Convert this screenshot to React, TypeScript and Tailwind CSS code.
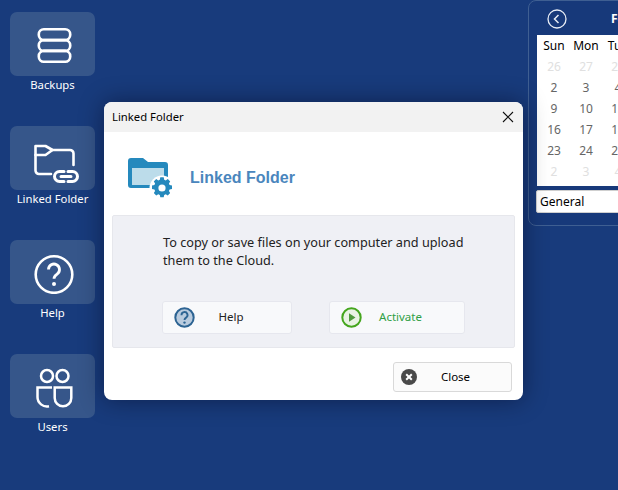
const font = { fontFamily: '"Noto Sans","Open Sans",sans-serif' };

function Tile({ label, children }: { label: string; children: React.ReactNode }) {
  return (
    <div className="flex h-[114px] w-[85px] flex-col items-center">
      <div className="flex h-16 w-[85px] items-center justify-center rounded-[7px] bg-[#36568a]">{children}</div>
      <div className="whitespace-nowrap text-[11.3px] leading-[18px] text-white">{label}</div>
    </div>
  );
}

const weeks = [
  [["26", 1], ["27", 1], ["28", 1]],
  [["2", 0], ["3", 0], ["4", 0]],
  [["9", 0], ["10", 0], ["11", 0]],
  [["16", 0], ["17", 0], ["18", 0]],
  [["23", 0], ["24", 0], ["25", 0]],
  [["2", 1], ["3", 1], ["4", 1]],
] as [string, number][][];

function Calendar() {
  return (
    <div className="ml-[433px] h-[226px] w-[200px] shrink-0 rounded-[8px] border border-[#3f5f92] bg-[#17397a] pl-[8px]">
      <div className="flex h-[34px] items-center pl-[10px] pt-[2px]">
        <svg width="20" height="20" viewBox="0 0 20 20" fill="none" stroke="#e8edf5" strokeWidth="1.3">
          <circle cx="10" cy="10" r="9" />
          <path d="M11.5 6 7.5 10l4 4" strokeWidth="1.5" />
        </svg>
        <span className="ml-[44px] text-[12px] font-bold text-white">February</span>
      </div>
      <div className="h-[151px] w-[200px] bg-white pl-[1px] text-[12px] leading-[21px]">
        <div className="flex text-black">
          {["Sun", "Mon", "Tue"].map((d) => (
            <div key={d} className="w-[32px] text-center">{d}</div>
          ))}
        </div>
        {weeks.map((w, i) => (
          <div key={i} className="flex">
            {w.map(([d, faded], j) => (
              <div key={j} className={`w-[32px] text-center ${faded ? "text-[#e0e0e0]" : "text-[#666]"}`}>{d}</div>
            ))}
          </div>
        ))}
      </div>
      <div className="-ml-[1px] mt-[4px] flex h-[23px] w-[200px] items-center rounded-[2px] border border-[#cfcfcf] bg-white pl-[3px] text-[12px] text-black">General</div>
    </div>
  );
}

function Dialog() {
  return (
    <div className="absolute left-[104px] top-[102px] flex h-[298px] w-[419px] flex-col overflow-hidden rounded-[8px] bg-white shadow-[0_0_24px_rgba(0,0,20,0.45)]">
      <div className="flex h-[30px] items-center justify-between bg-[#f2f2f2] pl-[8px] pr-[9px] text-[11.3px] text-black">
        <span className="pt-[1px]">Linked Folder</span>
        <svg width="12" height="12" viewBox="0 0 12 12" stroke="#111" strokeWidth="1.1">
          <path d="M1 1 11 11M11 1 1 11" />
        </svg>
      </div>
      <div className="flex h-[83px] items-center pl-[24px] pt-[7px]">
        <svg className="mt-[2px]" width="46" height="44" viewBox="0 0 46 44">
          <path d="M0 5a3 3 0 0 1 3-3h12l5 4h17a3 3 0 0 1 3 3v20a3 3 0 0 1-3 3H3a3 3 0 0 1-3-3z" fill="#2589bd" />
          <path d="M4 12h32v17H4z" fill="#bcdcea" />
          <circle cx="34" cy="32" r="12.5" fill="#fff" />
          <path transform="translate(0 0.8)" fill="#2589bd" fillRule="evenodd" d="M32.3 20.5h3.4l.5 2.4 1.5.7 2.1-1.3 2.4 2.4-1.3 2.1.7 1.5 2.4.5v3.4l-2.4.5-.7 1.5 1.3 2.1-2.4 2.4-2.1-1.3-1.5.7-.5 2.4h-3.4l-.5-2.4-1.5-.7-2.1 1.3-2.4-2.4 1.3-2.1-.7-1.5-2.4-.5v-3.4l2.4-.5.7-1.5-1.3-2.1 2.4-2.4 2.1 1.3 1.5-.7zM34 27.6a3.6 3.6 0 1 0 0 7.2 3.6 3.6 0 0 0 0-7.2z" />
        </svg>
        <span className="ml-[16px] mt-[1px] text-[16px] font-bold text-[#4a86bd]" style={{ fontFamily: '"Liberation Sans",sans-serif' }}>Linked Folder</span>
      </div>
      <div className="mx-[8px] flex h-[133px] flex-col rounded-[2px] border border-[#e6e7ec] bg-[#eff0f5] pl-[49px]">
        <p className="ml-[1px] mt-[17px] w-[320px] text-[12.7px] leading-[18px] text-[#222]">To copy or save files on your computer and upload them to the Cloud.</p>
        <div className="mt-[32px] flex gap-[37px]">
          <div className="relative flex h-[33px] w-[130px] items-center justify-center rounded-[3px] border border-[#e6e7ee] bg-[#f8f9fb] pb-[1px] pl-[8px] text-[11.5px] text-[#222]">
            <svg className="absolute left-[11px] top-[5px]" width="21" height="21" viewBox="0 0 21 21">
              <circle cx="10.5" cy="10.5" r="9.2" fill="#b9cbde" stroke="#2d6493" strokeWidth="2" />
              <path d="M7.5 8.2a3 3 0 1 1 4.6 2.4c-1 .7-1.6 1.2-1.6 2.4" fill="none" stroke="#2d6493" strokeWidth="1.9" />
              <circle cx="10.5" cy="15.6" r="1.2" fill="#2d6493" />
            </svg>
            Help
          </div>
          <div className="relative flex h-[33px] w-[136px] items-center justify-center rounded-[3px] border border-[#e6e7ee] bg-[#f8f9fb] pb-[1px] pl-[7px] text-[11.5px] text-[#2f9f45]">
            <svg className="absolute left-[11px] top-[5px]" width="21" height="21" viewBox="0 0 21 21">
              <circle cx="10.5" cy="10.5" r="9.2" fill="#e9f3e4" stroke="#45a61e" strokeWidth="2" />
              <path d="M8 6.2 14.5 10.5 8 14.8z" fill="#4f9a3c" />
            </svg>
            Activate
          </div>
        </div>
      </div>
      <div className="flex justify-end pr-[11px] pt-[14px]">
        <div className="relative flex h-[30px] w-[119px] items-center justify-center rounded-[3px] border border-[#d9d9d9] bg-[#fbfbfb] pb-[1px] pl-[6px] text-[11.5px] text-black">
          <svg className="absolute left-[7px] top-[6px]" width="16" height="16" viewBox="0 0 16 16">
            <circle cx="8" cy="8" r="8" fill="#4a4a4a" />
            <path d="M5.2 5.2 10.8 10.8M10.8 5.2 5.2 10.8" stroke="#fff" strokeWidth="2" />
          </svg>
          Close
        </div>
      </div>
    </div>
  );
}

export default function App() {
  return (
    <div className="relative flex h-[490px] w-[618px] overflow-hidden bg-[#183b7c]" style={font}>
      <div className="flex w-[95px] shrink-0 flex-col pl-[10px] pt-[12px]">
        <Tile label="Backups">
          <svg width="40" height="40" viewBox="0 0 40 40" fill="none" stroke="#fff" strokeWidth="2.6">
            <rect x="5.8" y="5.3" width="31.4" height="10.8" rx="5" />
            <rect x="5.8" y="16.1" width="31.4" height="10.8" rx="5" />
            <rect x="5.8" y="26.9" width="31.4" height="10.8" rx="5" />
          </svg>
        </Tile>
        <Tile label="Linked Folder">
          <svg width="52" height="52" viewBox="0 0 52 52" fill="none" stroke="#fff" strokeWidth="2.6" strokeLinejoin="round" strokeLinecap="round">
            <path d="M24 42H12a3.5 3.5 0 0 1-3.5-3.5V14H18.5L25.5 18H43a3.5 3.5 0 0 1 3.5 3.5V33" />
            <path d="M8.5 23H18.5L25.5 18" />
            <path d="M37 39.5h-4.5a5 5 0 0 0 0 10H37M41 39.5h4.5a5 5 0 0 1 0 10H41M34 44.5h10" strokeWidth="3" />
          </svg>
        </Tile>
        <Tile label="Help">
          <svg width="44" height="44" viewBox="0 0 44 44" fill="none" stroke="#fff" strokeWidth="2.6">
            <circle cx="23" cy="24.5" r="18.3" />
            <path d="M17.5 19.5a5.5 5.5 0 1 1 8.6 4.6c-1.9 1.3-3.1 2.3-3.1 4.6" strokeWidth="2.8" />
            <circle cx="23" cy="34" r="2" fill="#fff" stroke="none" />
          </svg>
        </Tile>
        <Tile label="Users">
          <svg width="44" height="44" viewBox="0 0 44 44" fill="none" stroke="#fff" strokeWidth="2.5">
            <circle cx="16" cy="12" r="6" />
            <circle cx="31.5" cy="12" r="6" />
            <path d="M21 23.5H6.5V33a9.5 9.5 0 0 0 11.5 9.3" />
            <path d="M23.7 23.5H40.3V34a8.3 8.3 0 0 1-16.6 0z" />
          </svg>
        </Tile>
      </div>
      <Calendar />
      <Dialog />
    </div>
  );
}
